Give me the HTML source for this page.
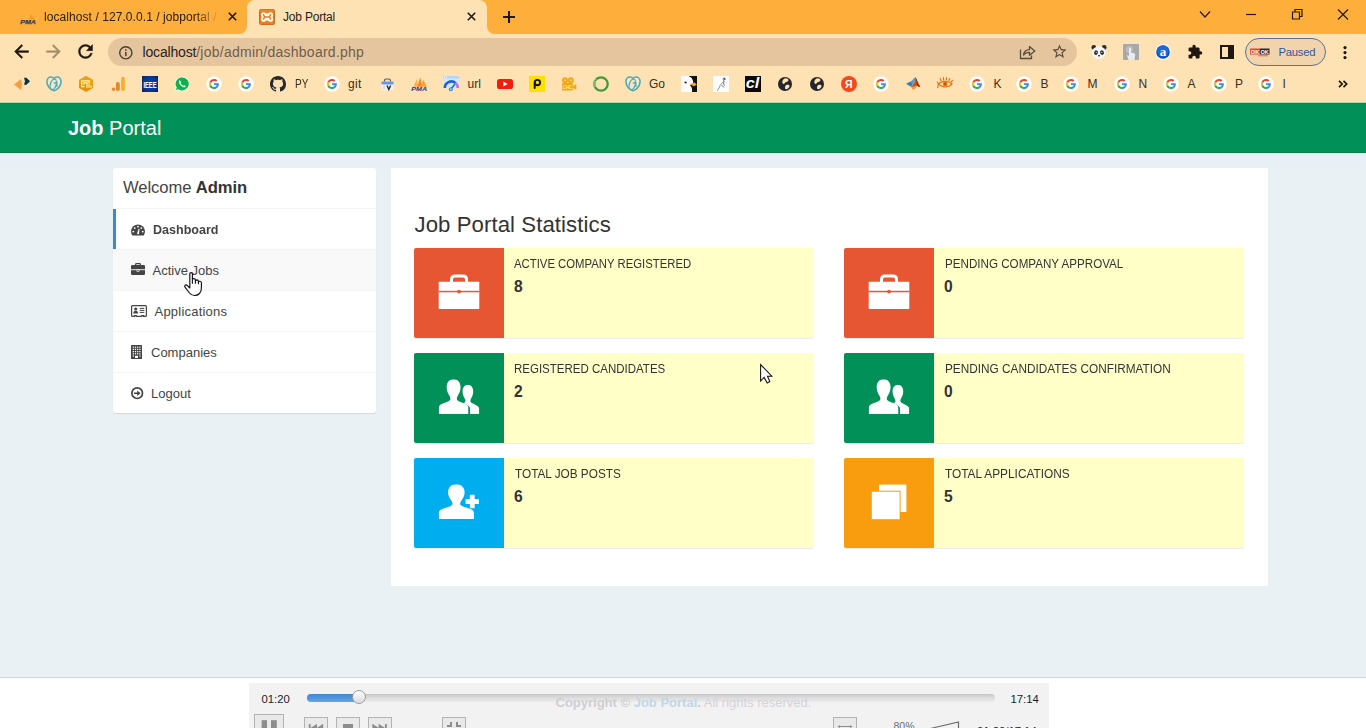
<!DOCTYPE html>
<html>
<head>
<meta charset="utf-8">
<title>Job Portal</title>
<style>
*{box-sizing:border-box;margin:0;padding:0}
html,body{width:1366px;height:728px;overflow:hidden;background:#eaf1f4;font-family:"Liberation Sans",sans-serif;}
.abs{position:absolute}
svg{position:absolute;overflow:visible}
.t{position:absolute;white-space:nowrap;line-height:1}
/* ---------- browser chrome ---------- */
#tabstrip{position:absolute;left:0;top:0;width:1366px;height:34px;background:#feae3b}
#toolbar{position:absolute;left:0;top:34px;width:1366px;height:69px;background:#fee2b3}
#omni{position:absolute;left:108px;top:38px;width:969px;height:28px;border-radius:14px;background:#e5c59d}
.bm{position:absolute;top:76px;width:16px;height:16px}
.bmt{position:absolute;top:77px;font-size:12px;color:#3a2e22;line-height:14px;white-space:nowrap}
/* ---------- page ---------- */
.sm{font-size:13px;line-height:14px;color:#444}
#nav{position:absolute;left:0;top:103px;width:1366px;height:50px;background:#009058}
#side{position:absolute;left:113px;top:168px;width:263px;height:245px;background:#fff;border-radius:3px;box-shadow:0 1px 1px rgba(0,0,0,.1)}
#content{position:absolute;left:391px;top:168px;width:877px;height:417.700px;background:#fff}
.ib{position:absolute;width:400px;height:90px;background:#ffffc8;border-radius:2px;box-shadow:0 1px 1px rgba(0,0,0,.08)}
.ib .ic{position:absolute;left:0;top:0;width:90px;height:90px;border-radius:2px 0 0 2px}
.ib .lb{position:absolute;left:100px;top:9px;font-size:12.500px;transform-origin:0 0;color:#333;white-space:nowrap;line-height:14px}
.ib .nm{position:absolute;left:100px;top:30px;font-size:15.600px;font-weight:bold;color:#333;line-height:18px}
#footer{position:absolute;left:0;top:677px;width:1366px;height:51px;background:#fff;border-top:1px solid #d2d6de}
#player{position:absolute;left:249px;top:683px;width:800px;height:45px;background:#f2f2f2}
.pb{border:1px solid #b2b2b2;background:#e9e9e9}
</style>
</head>
<body>
<!-- CHROME -->
<div id="tabstrip"></div>
<div id="toolbar"></div>
<div class="abs" style="left:0;top:102px;width:1366px;height:1px;background:#b9d6a2"></div>
<!-- active tab shape -->
<svg style="left:0;top:0" width="600" height="34" viewBox="0 0 600 34"><path d="M238.5 34 C243.5 34 247 30.5 247 26 V8 C247 3.5 250.5 0 255 0 H479 C483.500 0 487 3.5 487 8 V26 C487 30.5 490.500 34 495.500 34 Z" fill="#fee2b3"/></svg>
<!-- tab 1 -->
<svg id="pma1" style="left:20px;top:10px" width="17" height="15" viewBox="0 0 17 15"><path d="M3.500 9.300 L7.600 2.500 L8.600 9.300 Z" fill="#fdb64f" opacity=".55"/><path d="M8.800 9.300 L11 4 L14.800 9.300 Z" fill="#f8981f" opacity=".9"/><text x=".3" y="13.800" font-family="Liberation Sans" font-weight="bold" font-style="italic" font-size="5.400" fill="#3a3e5e" stroke="#3a3e5e" stroke-width=".25" textLength="15.600" lengthAdjust="spacingAndGlyphs">PMA</text></svg>
<div class="t" id="tab1t" style="letter-spacing:.07px;left:44px;top:10px;font-size:12px;color:#2b2016;width:175px;overflow:hidden;line-height:14px;-webkit-mask-image:linear-gradient(90deg,#000 152px,rgba(0,0,0,.18) 171px);mask-image:linear-gradient(90deg,#000 152px,rgba(0,0,0,.18) 171px)">localhost / 127.0.0.1 / jobportal /</div>
<svg style="left:227.600px;top:12.400px" width="9" height="9" viewBox="0 0 9 9"><path d="M0.800 0.800 L8.200 8.200 M8.200 0.800 L0.800 8.200" stroke="#1f1710" stroke-width="1.600" fill="none"/></svg>
<!-- tab 2 -->
<svg id="xampp" style="left:259px;top:9px" width="16" height="16" viewBox="0 0 16 16"><rect x="0" y="0" width="16" height="16" rx="2.200" fill="#c76a1c"/><rect x=".8" y=".8" width="14.400" height="14.400" rx="1.600" fill="#ec7c22"/><rect x=".8" y=".8" width="14.400" height="3" rx="1.600" fill="#e88a3a" opacity=".6"/><g fill="#fffbe8"><circle cx="4.600" cy="5.700" r="2.550"/><circle cx="11.500" cy="5.700" r="2.550"/><circle cx="4.600" cy="10.300" r="2.550"/><circle cx="11.500" cy="10.300" r="2.550"/><rect x="4.600" y="4.400" width="6.900" height="7.200"/><rect x="2.600" y="5.700" width="10.900" height="4.600"/></g><path d="M4.500 5.800 L5.600 8 L4.500 10.200 M11.600 5.800 L10.500 8 L11.600 10.200 M5.600 8 H10.500" fill="none" stroke="#e8792a" stroke-width="1.500" stroke-linecap="round" stroke-linejoin="round"/></svg>
<div class="t" id="tab2t" style="letter-spacing:-.2px;left:283px;top:10px;font-size:12px;color:#2b2016;line-height:14px">Job Portal</div>
<svg style="left:466.500px;top:12.400px" width="9" height="9" viewBox="0 0 9 9"><path d="M0.800 0.800 L8.200 8.200 M8.200 0.800 L0.800 8.200" stroke="#1f1710" stroke-width="1.600" fill="none"/></svg>
<svg style="left:503px;top:11px" width="12" height="12" viewBox="0 0 12 12"><path d="M6 0 V12 M0 6 H12" stroke="#1f1710" stroke-width="2" fill="none"/></svg>
<!-- window controls -->
<svg style="left:1196px;top:6px" width="160" height="18" viewBox="0 0 160 18"><g stroke="#2a1a0c" stroke-width="1.200" fill="none"><path d="M4 5.500 L9 11 L14 5.500"/><path d="M50 8.500 H60"/><path d="M96.500 6 H103.500 V13 H96.500 Z"/><path d="M99 6 V3.500 H106 V10.500 H103.500"/><path d="M142 3.500 L152 13.500 M152 3.500 L142 13.500"/></g></svg>
<!-- toolbar nav icons -->
<svg style="left:10.600px;top:41px" width="21" height="21" viewBox="0 0 24 24"><path d="M20 11H7.830l5.590-5.590L12 4l-8 8 8 8 1.410-1.410L7.830 13H20v-2z" fill="#1f1710" stroke="#1f1710" stroke-width=".5"/></svg>
<svg style="left:43.300px;top:41px" width="21" height="21" viewBox="0 0 24 24"><path d="M12 4l-1.410 1.410L16.170 11H4v2h12.170l-5.580 5.590L12 20l8-8z" fill="#a48c6b" stroke="#a48c6b" stroke-width=".4"/></svg>
<svg style="left:75.100px;top:41px" width="21" height="21" viewBox="0 0 24 24"><path d="M17.650 6.350C16.200 4.900 14.210 4 12 4c-4.420 0-7.990 3.580-7.990 8s3.570 8 7.990 8c3.730 0 6.840-2.550 7.730-6h-2.080c-.82 2.330-3.040 4-5.650 4-3.310 0-6-2.690-6-6s2.690-6 6-6c1.660 0 3.140.69 4.220 1.780L13 11h7V4l-2.350 2.350z" fill="#1f1710" stroke="#1f1710" stroke-width=".5"/></svg>
<div id="omni"></div>
<svg style="left:118px;top:44.500px" width="16" height="16" viewBox="0 0 16 16"><circle cx="7.800" cy="7.800" r="6.100" fill="none" stroke="#4a3f33" stroke-width="1.400"/><rect x="7.100" y="6.900" width="1.500" height="4.300" fill="#4a3f33"/><rect x="7.100" y="4.300" width="1.500" height="1.500" fill="#4a3f33"/></svg>
<div class="t" id="url" style="left:142.500px;top:44px;font-size:14px;line-height:17px;color:#6e5f4d"><span id="url1" style="letter-spacing:-.17px;color:#2b2218">localhost</span><span id="url2" style="letter-spacing:.25px">/job/admin/dashboard.php</span></div>
<!-- toolbar right -->
<svg id="share" style="left:1019px;top:45px" width="17" height="15" viewBox="0 0 17 15"><g fill="none" stroke="#5a4c3c" stroke-width="1.300" stroke-linejoin="round"><path d="M1.500 4.500 V13.500 H12.500 V10.500"/><path d="M4.500 10 C5 6.500 7.500 4.800 10.500 4.700 V1.500 L15.800 6 L10.500 10.300 V7.300 C8 7.200 6 8 4.500 10 Z"/></g></svg>
<svg id="star" style="left:1050.600px;top:43.300px" width="17" height="17" viewBox="0 0 24 24"><path d="M22 9.240l-7.190-.62L12 2 9.190 8.630 2 9.240l5.460 4.730L5.820 21 12 17.270 18.180 21l-1.630-7.030L22 9.240zM12 15.400l-3.760 2.270 1-4.280-3.320-2.880 4.380-.38L12 6.100l1.710 4.040 4.380.38-3.320 2.880 1 4.280L12 15.400z" fill="#5a4c3c"/></svg>
<svg id="panda" style="left:1091px;top:44px" width="16" height="16" viewBox="0 0 16 16"><circle cx="2.800" cy="3.400" r="2.400" fill="#2b2b2b"/><circle cx="13.200" cy="3.400" r="2.400" fill="#2b2b2b"/><ellipse cx="8" cy="8.600" rx="7" ry="6.300" fill="#f4f4f4"/><ellipse cx="5" cy="8.600" rx="1.900" ry="2.300" fill="#2b2b2b" transform="rotate(20 5 8.600)"/><ellipse cx="11" cy="8.600" rx="1.900" ry="2.300" fill="#2b2b2b" transform="rotate(-20 11 8.600)"/><circle cx="5.200" cy="8.300" r=".6" fill="#fff"/><circle cx="10.800" cy="8.300" r=".6" fill="#fff"/><ellipse cx="8" cy="11.700" rx="1.100" ry=".8" fill="#2b2b2b"/></svg>
<svg id="handext" style="left:1123px;top:44px" width="16" height="16" viewBox="0 0 16 16"><rect width="16" height="16" rx="1" fill="#a8a8a8"/><circle cx="6.500" cy="5.500" r="3.600" fill="#bdbdbd"/><path d="M5.600 16 L4 11.500 L5 11 L6 12.200 V4.600 Q6 3.600 7 3.600 Q8 3.600 8 4.600 V8.500 L11.500 9.500 Q12.300 9.800 12.200 10.800 L11.500 16 Z" fill="#e9ebf2"/></svg>
<svg id="aext" style="left:1155px;top:44px" width="16" height="16" viewBox="0 0 16 16"><circle cx="8" cy="8" r="8" fill="#f4f7ff"/><circle cx="8" cy="8" r="6.800" fill="#0f4fb8"/><circle cx="8" cy="7.200" r="5.600" fill="#1c68d6"/><text x="8" y="12.300" text-anchor="middle" font-family="Liberation Serif" font-weight="bold" font-size="13" fill="#fff">a</text></svg>
<svg id="puzzle" style="left:1185.700px;top:42px" width="20" height="20" viewBox="0 0 24 24"><path d="M20.500 11H19V7c0-1.100-.9-2-2-2h-4V3.500C13 2.120 11.880 1 10.500 1S8 2.120 8 3.500V5H4c-1.100 0-1.990.9-1.990 2v3.800H3.500c1.490 0 2.700 1.210 2.700 2.700s-1.210 2.700-2.700 2.700H2V20c0 1.100.9 2 2 2h3.800v-1.500c0-1.490 1.210-2.700 2.700-2.700 1.490 0 2.700 1.210 2.700 2.700V22H17c1.100 0 2-.9 2-2v-4h1.500c1.380 0 2.500-1.120 2.500-2.500S21.880 11 20.500 11z" fill="#1f1710" transform="translate(1.500,2.600) scale(.78)"/></svg>
<svg id="sidep" style="left:1220px;top:45px" width="14" height="14" viewBox="0 0 14 14"><rect x="1" y="1" width="12" height="12" fill="none" stroke="#1f1710" stroke-width="2"/><rect x="8" y="1" width="5" height="12" fill="#1f1710"/></svg>
<div class="abs" id="pill" style="left:1245px;top:38px;width:81px;height:28px;border-radius:14px;border:1px solid #5b7199;background:#f1d4ab"></div>
<svg id="okok" style="left:1250px;top:48px" width="20" height="9" viewBox="0 0 20 9"><rect x="0" y=".5" width="10" height="6" fill="#e8452c"/><rect x="10" y=".5" width="9.500" height="6" fill="#2e2a2a"/><text x="5" y="5.600" text-anchor="middle" font-family="Liberation Sans" font-weight="bold" font-size="5.600" fill="#fff">OK</text><text x="14.700" y="5.600" text-anchor="middle" font-family="Liberation Sans" font-weight="bold" font-size="5.600" fill="#fff">OK</text><rect x="8" y="7.300" width="10" height="1" fill="#e8654c"/></svg>
<div class="t" id="paused" style="left:1278.500px;top:45px;letter-spacing:-.25px;font-size:11.300px;line-height:14px;color:#36579a">Paused</div>
<svg style="left:1343px;top:45px" width="4" height="15" viewBox="0 0 4 15"><circle cx="2" cy="2.600" r="1.600" fill="#1f1710"/><circle cx="2" cy="7.600" r="1.600" fill="#1f1710"/><circle cx="2" cy="12.600" r="1.600" fill="#1f1710"/></svg>
<!-- BOOKMARKS -->
<svg width="0" height="0" style="left:0;top:0"><defs>
<symbol id="gsym" viewBox="0 0 16 16"><circle cx="8" cy="8" r="7.700" fill="#fff"/><g transform="translate(2.900,2.900) scale(.2125)"><path fill="#EA4335" d="M24 9.500c3.540 0 6.710 1.220 9.210 3.600l6.850-6.850C35.900 2.380 30.470 0 24 0 14.620 0 6.510 5.380 2.560 13.220l7.980 6.190C12.430 13.720 17.740 9.500 24 9.500z"/><path fill="#4285F4" d="M46.980 24.550c0-1.570-.15-3.090-.38-4.550H24v9.020h12.940c-.58 2.960-2.260 5.480-4.780 7.180l7.730 6c4.510-4.180 7.090-10.360 7.090-17.650z"/><path fill="#FBBC05" d="M10.530 28.590c-.48-1.450-.76-2.990-.76-4.590s.27-3.140.76-4.590l-7.980-6.190C.92 16.460 0 20.120 0 24c0 3.880.92 7.540 2.560 10.780l7.970-6.190z"/><path fill="#34A853" d="M24 48c6.480 0 11.930-2.130 15.890-5.810l-7.730-6c-2.150 1.450-4.920 2.300-8.160 2.300-6.260 0-11.570-4.220-13.470-9.910l-7.980 6.190C6.510 42.620 14.620 48 24 48z"/></g></symbol>
<symbol id="gdsym" viewBox="0 0 16 16"><g fill="none" stroke="#4fabb9" stroke-linejoin="round" stroke-linecap="round"><path d="M8 14.700 C4 13.600 .9 9.500 .9 5.600 C.9 2.800 2.900 1 5 1 C6.400 1 7.400 1.700 8 2.600 C8.600 1.700 9.600 1 11 1 C13.100 1 15.100 2.800 15.100 5.600 C15.100 9.500 12 13.600 8 14.700 Z" stroke-width="1.600" fill="#d9eee9" fill-opacity=".35"/><ellipse cx="7.300" cy="8.400" rx="2.900" ry="5.400" transform="rotate(17 7.300 8.400)" stroke-width="1.300"/><path d="M8.300 7.100 L10.700 6.300 L10.900 10.200" stroke-width="1.400"/></g></symbol>
<symbol id="globesym" viewBox="0 0 16 16"><circle cx="8" cy="8" r="7" fill="#23262b"/><path d="M8.500 2.300 C10.500 2.300 12 3.300 11.300 4.800 C10.600 6.200 8.300 5.700 7.700 7.200 C7.200 8.400 5.500 8 5.300 6.600 C5.100 4.600 6.500 2.300 8.500 2.300 Z M9.200 9 C10.600 8.300 12.900 8.600 12.600 10.300 C12.300 11.900 10.500 13.400 9 13.300 C7.600 13.200 7.800 9.700 9.200 9 Z" fill="#fee2b3"/></symbol>
</defs></svg>
<svg style="left:14px;top:77px" width="17" height="14" viewBox="0 0 17 14"><path d="M0 7.500 L7 2 L8 7.500 L7 13 Z" fill="#f99e3c"/><path d="M10 .7 H12.500 L16 4.200 L12.500 7.700 H10 L11 4.200 Z" fill="#0b3540"/></svg>
<svg style="left:46px;top:76px" width="16" height="16" viewBox="0 0 16 16"><use href="#gdsym"/></svg>
<svg style="left:78px;top:76px" width="16" height="16" viewBox="0 0 16 16"><path d="M8 -.1 L15 3.900 V12 L8 16 L1 12 V3.900 Z" fill="#e8910e"/><path d="M8 -.1 L15 3.900 V8 H1 V3.900 Z" fill="#efa01a"/><g fill="none" stroke="#fff7a0" stroke-width="1.250"><path d="M11.100 6.900 V4.800 H3.800 V10.500 H6.700"/><path d="M9.100 8 V6.900 H6 V8.800" stroke-width="1.100"/></g><g fill="#fff7a0"><rect x="8.400" y="7.900" width="1.150" height="3.900"/><rect x="10.450" y="7.300" width="1.150" height="4.500"/><rect x="12.500" y="9.100" width="1.150" height="2.700"/></g></svg>
<svg style="left:110px;top:76px" width="16" height="16" viewBox="0 0 16 16"><circle cx="3.500" cy="13.300" r="1.700" fill="#e8862c"/><rect x="5.900" y="6" width="3.900" height="9" rx="1.900" fill="#e8862c"/><rect x="11.200" y=".8" width="3.600" height="14.200" rx="1.800" fill="#f7ac2a"/></svg>
<svg style="left:142px;top:76px" width="16" height="16" viewBox="0 0 16 16"><defs><radialGradient id="ie" cx=".5" cy=".5" r=".75"><stop offset="0" stop-color="#0d45b5"/><stop offset=".6" stop-color="#0a3590"/><stop offset="1" stop-color="#061a48"/></radialGradient></defs><rect width="16" height="16" fill="url(#ie)"/><text x="8" y="11.700" text-anchor="middle" font-family="Liberation Sans" font-weight="bold" font-size="9.500" fill="#fff" textLength="13.200" lengthAdjust="spacingAndGlyphs">IEEE</text></svg>
<svg style="left:174px;top:76px" width="16" height="16" viewBox="0 0 16 16"><path d="M8.200 .6 A7.300 7.300 0 1 1 4.300 14.200 L.8 15.300 L1.900 11.900 A7.300 7.300 0 0 1 8.200 .6 Z" fill="#e6f7ea"/><path d="M8.200 1.400 A6.500 6.500 0 1 1 4.500 13.200 L2 14 L2.800 11.600 A6.500 6.500 0 0 1 8.200 1.400 Z" fill="#12b04b"/><path d="M5.800 4.300 C5.200 4.500 4.700 5.400 5 6.400 C5.600 8.500 7.500 10.600 9.800 11.200 C10.700 11.400 11.600 10.900 11.800 10.200 L10.100 9.200 L9.300 9.900 C8.300 9.500 7 8.200 6.500 7.100 L7.200 6.300 Z" fill="#fff"/></svg>
<svg style="left:206px;top:76px" width="16" height="16" viewBox="0 0 16 16"><use href="#gsym"/></svg>
<svg style="left:238px;top:76px" width="16" height="16" viewBox="0 0 16 16"><use href="#gsym"/></svg>
<svg style="left:270px;top:76px" width="16" height="16" viewBox="0 0 16 16"><path fill="#24292e" d="M8 0C3.580 0 0 3.580 0 8c0 3.540 2.290 6.530 5.470 7.590.4.070.55-.17.550-.38 0-.19-.01-.82-.01-1.490-2.010.37-2.530-.49-2.690-.94-.09-.23-.48-.94-.82-1.130-.28-.15-.68-.52-.01-.53.630-.01 1.080.58 1.230.82.720 1.210 1.870.87 2.330.66.070-.52.280-.87.510-1.070-1.780-.2-3.640-.89-3.640-3.950 0-.87.310-1.590.82-2.150-.08-.2-.36-1.020.08-2.120 0 0 .67-.21 2.200.82.640-.18 1.320-.27 2-.27.680 0 1.360.09 2 .27 1.530-1.040 2.200-.82 2.200-.82.440 1.100.16 1.920.08 2.120.51.560.82 1.270.82 2.150 0 3.070-1.870 3.750-3.650 3.950.29.250.54.730.54 1.480 0 1.070-.01 1.930-.01 2.200 0 .21.150.46.550.38A8.013 8.013 0 0016 8c0-4.420-3.580-8-8-8z"/></svg>
<div class="bmt" id="bPY" style="left:294.500px;transform:scaleX(.84);transform-origin:0 0">PY</div>
<svg style="left:324px;top:76px" width="16" height="16" viewBox="0 0 16 16"><use href="#gsym"/></svg>
<div class="bmt" id="bgit" style="left:348px;letter-spacing:.35px">git</div>
<svg style="left:381px;top:78px" width="13" height="13" viewBox="0 0 13 13"><path d="M3.500 4 V2.800 Q3.500 1 5.300 1 H7.700 Q9.500 1 9.500 2.800 V4" fill="none" stroke="#565b68" stroke-width="1.200"/><rect x=".5" y="3.500" width="12" height="9" rx="1" fill="#f6f1e6"/><rect x=".5" y="3.500" width="12" height="3" rx=".8" fill="#6896e6"/><path d="M6 7.500 L7.800 11.500 L9.600 7.500" fill="none" stroke="#2a2e38" stroke-width="1.500"/><rect x="2.300" y="7.800" width="1.500" height="3.400" fill="#c9d3e6"/></svg>
<svg style="left:411px;top:77px" width="17" height="15" viewBox="0 0 17 15"><path d="M2.500 9.800 L6 1.800 L7.200 9.800 Z" fill="#f9b04e"/><path d="M6.200 9.800 L9.300 .3 L11.300 9.800 Z" fill="#f58a1f"/><path d="M10.200 9.800 L12 2.500 L16 9.800 Z" fill="#f9a03a"/><text x=".3" y="14.300" font-family="Liberation Sans" font-weight="bold" font-style="italic" font-size="5.600" fill="#2f347c" textLength="15.800" lengthAdjust="spacingAndGlyphs">PMA</text></svg>
<svg style="left:443px;top:76px" width="17" height="16" viewBox="0 0 17 16"><rect x="0" y="0" width="16.500" height="12" rx="1" fill="#d6e8fc"/><rect x="0" y="0" width="16.500" height="2.400" rx="1" fill="#b6d4fa"/><circle cx="1.600" cy="1.200" r=".6" fill="#fff"/><circle cx="3.400" cy="1.200" r=".6" fill="#fff"/><path d="M1.800 12 A6.500 6.500 0 0 1 12.500 7" fill="none" stroke="#1a5fe0" stroke-width="2.600"/><path d="M12.500 7 A6.500 6.500 0 0 1 14.800 12" fill="none" stroke="#c070e0" stroke-width="2.600"/><path d="M8 13 L11.800 8.300" stroke="#1a5fe0" stroke-width="1.400"/><circle cx="7.800" cy="13.200" r="2" fill="#2f8bf5"/><circle cx="7.800" cy="13.200" r=".9" fill="#9fd0ff"/></svg>
<div class="bmt" id="burl" style="left:467.5px">url</div>
<svg style="left:497px;top:79px" width="16" height="10" viewBox="0 0 16 10"><rect width="16" height="10" rx="2.600" fill="#f61c0d"/><path d="M6.300 2.600 L10.600 5 L6.300 7.400 Z" fill="#fff"/></svg>
<svg style="left:529px;top:76px" width="16" height="16" viewBox="0 0 16 16"><rect width="16" height="16" fill="#ffdf00"/><circle cx="8.400" cy="6.600" r="2.700" fill="none" stroke="#111" stroke-width="1.900"/><path d="M5.700 7 V12" stroke="#111" stroke-width="1.900" stroke-linecap="round"/></svg>
<svg style="left:561px;top:77px" width="16" height="14" viewBox="0 0 16 14"><g fill="#f9a50e"><circle cx="4" cy="3.200" r="2.900"/><circle cx="9.800" cy="3.200" r="2.900"/><rect x="1" y="6" width="10.800" height="7.600" rx="1.200"/><path d="M11.500 9.500 L15.300 7 V12.800 L11.500 10.500 Z"/></g><circle cx="4" cy="3.200" r="1" fill="#ffd98a"/><circle cx="9.800" cy="3.200" r="1" fill="#ffd98a"/><text x="6.400" y="12" text-anchor="middle" font-family="Liberation Sans" font-weight="bold" font-size="4.500" fill="#ffe9b8">CHC</text></svg>
<svg style="left:593px;top:76px" width="16" height="16" viewBox="0 0 16 16"><circle cx="8" cy="8" r="6.700" fill="none" stroke="#3f9a38" stroke-width="2.300"/><path d="M3.200 3.400 A6.700 6.700 0 0 0 2 11" fill="none" stroke="#9fc98a" stroke-width="2.400" stroke-dasharray="1 .8"/></svg>
<svg style="left:625px;top:76px" width="16" height="16" viewBox="0 0 16 16"><use href="#gdsym"/></svg>
<div class="bmt" id="bGo" style="left:649px">Go</div>
<svg style="left:681px;top:76px" width="16" height="16" viewBox="0 0 16 16"><rect width="16" height="16" fill="#111"/><path d="M0 0 H7.500 C11.500 1.500 12.500 5 12.200 7.500 L9 9.500 C11 11 11.500 14 11 16 H0 Z" fill="#fbfbfb"/><path d="M8.500 8.300 L13.500 6.500 L16 8.800 L12.800 10.300 Z" fill="#f5a030"/><ellipse cx="4.600" cy="6.500" rx="1.300" ry=".9" fill="#222" transform="rotate(25 4.600 6.500)"/></svg>
<svg style="left:713px;top:76px" width="16" height="16" viewBox="0 0 16 16"><rect width="16" height="16" fill="#fdfdfd"/><g fill="none" stroke="#555" stroke-width=".9"><path d="M10.800 1.500 C9.800 2.500 10.200 4.500 11.200 5 C10.200 6.500 10.500 8 11.500 9.500"/><path d="M10.500 5.500 C8.500 7.500 7 9 6.500 11 C6 12.500 5 13.500 4.200 14.800" stroke="#888"/><path d="M8.500 9.500 C9.500 10 10.800 10.500 11.300 11.500" stroke="#666"/><path d="M11.500 2 L12 4" stroke="#333" stroke-width="1.200"/></g></svg>
<svg style="left:745px;top:76px" width="16" height="16" viewBox="0 0 16 16"><rect width="16" height="16" fill="#0a0a0a"/><text x="7.600" y="12.300" text-anchor="middle" font-family="Liberation Sans" font-weight="bold" font-style="italic" font-size="14.500" fill="#fff" textLength="13.600" lengthAdjust="spacingAndGlyphs">cl</text></svg>
<svg style="left:777px;top:76px" width="16" height="16" viewBox="0 0 16 16"><use href="#globesym"/></svg>
<svg style="left:809px;top:76px" width="16" height="16" viewBox="0 0 16 16"><use href="#globesym"/></svg>
<svg style="left:841px;top:76px" width="16" height="16" viewBox="0 0 16 16"><circle cx="8" cy="8" r="8" fill="#f4491a"/><text x="7.800" y="12" text-anchor="middle" font-family="Liberation Sans" font-weight="bold" font-size="10.500" fill="#fff">&#1071;</text></svg>
<svg style="left:873px;top:76px" width="16" height="16" viewBox="0 0 16 16"><use href="#gsym"/></svg>
<svg style="left:906px;top:77px" width="15" height="13" viewBox="0 0 15 13"><path d="M0 6.800 L4.500 4.600 L7 6.500 L5 9.800 Z" fill="#3a7bbf"/><path d="M4.500 4.600 C6.500 3.500 8 1 9.300 0 C9.500 3 8 7.500 5 9.800 L7 6.500 Z" fill="#5a9ad6"/><path d="M9.300 0 C10.800 2 12.500 8 14.500 9.800 C13 10 12 9.500 11 8.500 C10 10 8.500 12 7.300 12.500 L5 9.800 C8 7.500 9.500 3 9.300 0 Z" fill="#d0551a"/><path d="M9.300 0 C10.800 2 12.500 8 14.500 9.800 C13 10 12 9.500 11 8.500 C10.800 5.500 10 2 9.300 0 Z" fill="#8a2a10"/><path d="M5 9.800 L7.300 12.500 C8.500 12 10 10 11 8.500 C9 9.500 7 10 5 9.800 Z" fill="#f0a030"/></svg>
<svg style="left:937px;top:77px" width="17" height="12" viewBox="0 0 17 12"><g fill="none" stroke="#e8720c" stroke-width="1.200" stroke-linecap="round"><path d="M1.500 7.200 C4 3.600 11 3.200 15 6.800 C11.500 10.800 5 10.800 1.500 7.200 Z"/><path d="M1.500 7.200 L.6 10.600 M1.500 7.200 L.4 5"/><path d="M4.200 3.700 L3.200 1.600 M6.700 2.900 L6.300 .7 M9.300 2.900 L9.600 .6 M11.800 3.600 L12.800 1.500 M14 5 L15.600 3.400"/></g><circle cx="8.200" cy="7" r="2.300" fill="#e8720c"/><circle cx="8.200" cy="7" r=".9" fill="#c23c08"/></svg>
<svg style="left:969px;top:76px" width="16" height="16" viewBox="0 0 16 16"><use href="#gsym"/></svg>
<div class="bmt" style="left:993.5px">K</div>
<svg style="left:1016px;top:76px" width="16" height="16" viewBox="0 0 16 16"><use href="#gsym"/></svg>
<div class="bmt" style="left:1040.5px">B</div>
<svg style="left:1063px;top:76px" width="16" height="16" viewBox="0 0 16 16"><use href="#gsym"/></svg>
<div class="bmt" style="left:1087.5px">M</div>
<svg style="left:1114px;top:76px" width="16" height="16" viewBox="0 0 16 16"><use href="#gsym"/></svg>
<div class="bmt" style="left:1138.5px">N</div>
<svg style="left:1163px;top:76px" width="16" height="16" viewBox="0 0 16 16"><use href="#gsym"/></svg>
<div class="bmt" style="left:1187.5px">A</div>
<svg style="left:1211px;top:76px" width="16" height="16" viewBox="0 0 16 16"><use href="#gsym"/></svg>
<div class="bmt" style="left:1235px">P</div>
<svg style="left:1258px;top:76px" width="16" height="16" viewBox="0 0 16 16"><use href="#gsym"/></svg>
<div class="bmt" style="left:1282.5px">I</div>
<svg style="left:1338px;top:80px" width="10" height="8" viewBox="0 0 10 8"><path d="M1 .8 L4.200 4 L1 7.200 M5.500 .8 L8.700 4 L5.500 7.200" fill="none" stroke="#1f1710" stroke-width="1.700"/></svg>
<!-- PAGE -->
<div id="nav"></div>
<div class="abs" style="left:0;top:103px;width:1366px;height:1px;background:#17804f"></div>
<div class="abs" style="left:0;top:152px;width:1366px;height:1px;background:#0e7d4d"></div>
<div class="abs" style="left:0;top:153px;width:1366px;height:1px;background:#c9f9e8"></div>
<div class="abs" style="left:0;top:154px;width:1366px;height:14px;background:linear-gradient(#e8eff8,#eaf1f4)"></div>
<div class="t" id="brand" style="left:68px;top:117px;font-size:20px;line-height:22px;color:#fff"><b>Job</b> Portal</div>
<div id="side">
  <div class="abs" style="left:0;top:40px;width:263px;height:1px;background:#f4f4f4"></div>
  <div class="abs" style="left:0;top:82px;width:263px;height:40px;background:#f9f9f9"></div>
  <div class="abs" style="left:0;top:81px;width:263px;height:1px;background:#f4f4f4"></div>
  <div class="abs" style="left:0;top:122px;width:263px;height:1px;background:#f4f4f4"></div>
  <div class="abs" style="left:0;top:163px;width:263px;height:1px;background:#f4f4f4"></div>
  <div class="abs" style="left:0;top:204px;width:263px;height:1px;background:#f4f4f4"></div>
  <div class="abs" style="left:0;top:41px;width:3px;height:40px;background:#3c8dbc"></div>
</div>
<div class="t" id="welcome" style="left:123px;top:179px;letter-spacing:-.08px;font-size:16.600px;line-height:18px;color:#444">Welcome <b style="color:#333">Admin</b></div>
<div class="t sm" id="m1" style="left:153px;top:223px;font-weight:bold;transform:scaleX(.965);transform-origin:0 0">Dashboard</div>
<div class="t sm" id="m2" style="left:152.500px;top:264px">Active Jobs</div>
<div class="t sm" id="m3" style="left:154.500px;top:305px;letter-spacing:.22px">Applications</div>
<div class="t sm" id="m4" style="left:151px;top:346px">Companies</div>
<div class="t sm" id="m5" style="left:151px;top:387px">Logout</div>
<div id="content"></div>
<div class="t" id="h3" style="left:414.500px;top:213px;letter-spacing:.07px;font-size:22.200px;line-height:24px;color:#333">Job Portal Statistics</div>
<div class="ib" style="left:414px;top:248px"><div class="ic" style="background:#e65633"></div><div class="lb" id="l1" style="left:100px;transform:scaleX(0.907)">ACTIVE COMPANY REGISTERED</div><div class="nm" id="n1">8</div></div>
<div class="ib" style="left:844px;top:248px"><div class="ic" style="background:#e65633"></div><div class="lb" id="l2" style="left:100.5px;transform:scaleX(0.93)">PENDING COMPANY APPROVAL</div><div class="nm" id="n2">0</div></div>
<div class="ib" style="left:414px;top:353px"><div class="ic" style="background:#009058"></div><div class="lb" id="l3" style="left:100px;transform:scaleX(0.92)">REGISTERED CANDIDATES</div><div class="nm" id="n3">2</div></div>
<div class="ib" style="left:844px;top:353px"><div class="ic" style="background:#009058"></div><div class="lb" id="l4" style="left:100.5px;transform:scaleX(0.944)">PENDING CANDIDATES CONFIRMATION</div><div class="nm" id="n4">0</div></div>
<div class="ib" style="left:414px;top:458px"><div class="ic" style="background:#00aeef"></div><div class="lb" id="l5" style="left:100.5px;transform:scaleX(0.942)">TOTAL JOB POSTS</div><div class="nm" id="n5">6</div></div>
<div class="ib" style="left:844px;top:458px"><div class="ic" style="background:#f99d0e"></div><div class="lb" id="l6" style="left:101px;transform:scaleX(0.948)">TOTAL APPLICATIONS</div><div class="nm" id="n6">5</div></div>
<!-- sidebar icons -->
<svg id="i1" style="left:131px;top:223.500px" width="14" height="12" viewBox="0 0 14 12"><path d="M1.300 11.600 A7 7 0 1 1 12.700 11.600 Z" fill="#444"/><g fill="#fff"><circle cx="2.300" cy="7.600" r=".95"/><circle cx="3.700" cy="4.100" r=".95"/><circle cx="7" cy="2.600" r=".95"/><circle cx="10.300" cy="4.100" r=".95"/><circle cx="11.700" cy="7.600" r=".95"/><path d="M6 9.800 L7.700 4.600 L8.500 4.900 L7.900 10.200 Z"/></g></svg>
<svg id="i2" style="left:131px;top:263px" width="14" height="12" viewBox="0 0 14 12"><path d="M4.600 2.200 V1.400 Q4.600 .6 5.400 .6 H8.600 Q9.400 .6 9.400 1.400 V2.200" fill="none" stroke="#444" stroke-width="1.200"/><rect x="0" y="2" width="14" height="10" rx="1.200" fill="#444"/><rect x="0" y="6.300" width="14" height=".9" fill="#f9f9f9"/><rect x="5.600" y="6.300" width="2.800" height="2.300" fill="#f9f9f9"/><rect x="6.300" y="7" width="1.400" height=".9" fill="#444"/></svg>
<svg id="i3" style="left:131px;top:305px" width="16" height="12" viewBox="0 0 16 12"><path d="M1.600 .6 H14.400 Q15.400 .6 15.400 1.600 V10.400 Q15.400 11.400 14.400 11.400 H12.600 V10.500 H10.800 V11.400 H5.200 V10.500 H3.400 V11.400 H1.600 Q.6 11.400 .6 10.400 V1.600 Q.6 .6 1.600 .6 Z" fill="none" stroke="#444" stroke-width="1.200"/><circle cx="4.700" cy="4" r="1.600" fill="#444"/><path d="M2.300 8.600 Q2.300 5.800 4.700 5.800 Q7.100 5.800 7.100 8.600 Z" fill="#444"/><path d="M8.700 3.400 H13.300 M8.700 5.400 H13.300 M8.700 7.400 H13.300" stroke="#444" stroke-width="1"/></svg>
<svg id="i4" style="left:131px;top:345px" width="11" height="14" viewBox="0 0 11 14"><rect width="11" height="14" rx=".5" fill="#444"/><g fill="#fff"><rect x="1.700" y="1.600" width="1.250" height="1.250"/><rect x="3.900" y="1.600" width="1.250" height="1.250"/><rect x="6.100" y="1.600" width="1.250" height="1.250"/><rect x="8.300" y="1.600" width="1.250" height="1.250"/><rect x="1.700" y="3.800" width="1.250" height="1.250"/><rect x="3.900" y="3.800" width="1.250" height="1.250"/><rect x="6.100" y="3.800" width="1.250" height="1.250"/><rect x="8.300" y="3.800" width="1.250" height="1.250"/><rect x="1.700" y="6" width="1.250" height="1.250"/><rect x="3.900" y="6" width="1.250" height="1.250"/><rect x="6.100" y="6" width="1.250" height="1.250"/><rect x="8.300" y="6" width="1.250" height="1.250"/><rect x="1.700" y="8.200" width="1.250" height="1.250"/><rect x="3.900" y="8.200" width="1.250" height="1.250"/><rect x="6.100" y="8.200" width="1.250" height="1.250"/><rect x="8.300" y="8.200" width="1.250" height="1.250"/><rect x="1.700" y="10.400" width="1.250" height="1.250"/><rect x="8.300" y="10.400" width="1.250" height="1.250"/><rect x="4" y="10.800" width="3" height="2.200"/></g></svg>
<svg id="i5" style="left:131px;top:386.800px" width="13" height="13" viewBox="0 0 13 13"><circle cx="6.200" cy="6.200" r="5.300" fill="none" stroke="#444" stroke-width="1.700"/><path d="M3 5.400 H6.200 V3.400 L9.600 6.200 L6.200 9 V7 H3 Z" fill="#444"/></svg>
<!-- info icons -->
<svg id="bc1" style="left:438px;top:274px" width="42" height="36" viewBox="0 0 42 36"><path d="M13.500 9 V5.500 Q13.500 2 17 2 H25 Q28.500 2 28.500 5.500 V9" fill="none" stroke="#fff" stroke-width="3"/><rect x=".7" y="7.700" width="40.600" height="27.300" rx=".8" fill="#fff"/><rect x=".7" y="16.800" width="40.600" height="1.500" fill="#e65633"/><circle cx="21" cy="17.600" r="1.900" fill="#e65633"/></svg>
<svg id="bc2" style="left:868px;top:274px" width="42" height="36" viewBox="0 0 42 36"><path d="M13.500 9 V5.500 Q13.500 2 17 2 H25 Q28.500 2 28.500 5.500 V9" fill="none" stroke="#fff" stroke-width="3"/><rect x=".7" y="7.700" width="40.600" height="27.300" rx=".8" fill="#fff"/><rect x=".7" y="16.800" width="40.600" height="1.500" fill="#e65633"/><circle cx="21" cy="17.600" r="1.900" fill="#e65633"/></svg>
<svg width="0" height="0" style="left:0;top:0"><defs>
<symbol id="person" viewBox="0 0 30 35" preserveAspectRatio="none"><path d="M15 0 C19.500 0 22 3.500 22 8 C22 12.500 20 15 18.700 17.500 C18.200 18.500 18.200 20 18.500 20.800 C20.500 22.500 24 23.500 27 25 C29 26 30 27.500 30 29.500 V35 H0 V29.500 C0 27.500 1 26 3 25 C6 23.500 9.500 22.500 11.500 20.800 C11.800 20 11.800 18.500 11.300 17.500 C10 15 8 12.500 8 8 C8 3.500 10.500 0 15 0 Z"/></symbol>
</defs></svg>
<svg id="pp1" style="left:438px;top:379px" width="42" height="36" viewBox="0 0 42 36"><use href="#person" x="18.500" y="5.700" width="22.800" height="29.300" fill="#fff"/><use href="#person" x="-.8" y="-.8" width="33" height="37" fill="#009058"/><use href="#person" x=".7" y=".3" width="29.800" height="34.700" fill="#fff"/></svg>
<svg id="pp2" style="left:868px;top:379px" width="42" height="36" viewBox="0 0 42 36"><use href="#person" x="18.500" y="5.700" width="22.800" height="29.300" fill="#fff"/><use href="#person" x="-.8" y="-.8" width="33" height="37" fill="#009058"/><use href="#person" x=".7" y=".3" width="29.800" height="34.700" fill="#fff"/></svg>
<svg id="pa" style="left:438px;top:484px" width="42" height="36" viewBox="0 0 42 36"><use href="#person" x=".7" y=".3" width="35.300" height="34.700" fill="#fff"/><path d="M27.600 17.500 H40.900 M34.250 10.850 V24.150" stroke="#00aeef" stroke-width="6.800"/><path d="M27.600 17.500 H40.900 M34.250 10.850 V24.150" stroke="#fff" stroke-width="4.800"/></svg>
<svg id="br" style="left:871px;top:484px" width="36" height="36" viewBox="0 0 36 36"><rect x="8" y=".6" width="27.400" height="27.400" fill="#fff"/><rect x="-.2" y="6.700" width="29.800" height="29" fill="#f99d0e"/><rect x=".8" y="7.700" width="27.800" height="27.500" fill="#fff"/></svg>
<div id="footer"></div>
<div id="player"></div>
<div class="abs" style="left:306.500px;top:693.500px;width:688px;height:8.500px;border-radius:4.250px;background:linear-gradient(#c6c6c6,#dcdcdc 45%,#ebebeb)"></div>
<div class="abs" style="left:306.500px;top:693.500px;width:56px;height:8.500px;border-radius:4.250px;background:linear-gradient(#4686d2,#4f95dd 50%,#66a6e6)"></div>
<div class="abs" style="left:351.800px;top:689.800px;width:14px;height:14px;border-radius:7px;border:1px solid #9c9c9c;background:linear-gradient(#fdfdfd,#dcdcdc)"></div>
<div class="t" id="copy" style="left:555.500px;top:696px;font-size:13px;line-height:14px;color:#d4d4d4;transform-origin:0 0"><b style="color:#cfcfcf">Copyright &copy; <span style="color:#c2d6e5">Job Portal</span><span style="color:#c9c9c9">.</span></b> All rights reserved.</div>
<div class="t" id="pt1" style="left:261.500px;top:693px;font-size:11.300px;line-height:12px;color:#1b1b2b">01:20</div>
<div class="t" id="pt2" style="left:1010.500px;top:693px;font-size:11.300px;line-height:12px;color:#1b1b2b">17:14</div>
<div class="abs pb" style="left:254px;top:714px;width:30px;height:20px"></div>
<div class="abs pb" style="left:304px;top:717px;width:24px;height:20px"></div>
<div class="abs pb" style="left:336px;top:717px;width:24px;height:20px"></div>
<div class="abs pb" style="left:368px;top:717px;width:24px;height:20px"></div>
<div class="abs pb" style="left:442px;top:717px;width:24px;height:20px"></div>
<div class="abs pb" style="left:833px;top:717px;width:24px;height:20px"></div>
<svg style="left:249px;top:708px" width="800" height="20" viewBox="0 0 800 20"><g fill="#8c8c8c"><rect x="12.600" y="12.200" width="5.400" height="8"/><rect x="22" y="12.200" width="5.800" height="8"/><rect x="59.800" y="16" width="1.800" height="4"/><path d="M68 15.800 L61.600 20 H68 Z M74.200 15.800 L67.800 20 H74.200 Z"/><rect x="94" y="16" width="10" height="4"/><path d="M123.400 15.800 L129.800 20 H123.400 Z M129.600 15.800 L136 20 H129.600 Z"/><rect x="136" y="16" width="1.800" height="4"/><path d="M201 14 H203 V19 H198 V17 H201 Z M207 14 H209 V17 H212 V19 H207 Z"/><path d="M588.500 18.500 L591 17 V20 Z M603.500 18.500 L601 17 V20 Z"/><rect x="590.500" y="18" width="11" height="1"/></g><path d="M681.500 20.500 L709.500 14 V20.500" fill="none" stroke="#6a6a6a" stroke-width="1.200"/></svg>
<div class="t" id="vol" style="left:893.500px;top:721px;font-size:10.500px;line-height:10px;color:#6e6e6e">80%</div>
<div class="t" id="pt3" style="left:977px;top:725.300px;font-size:11.300px;line-height:12px;color:#1b1b2b">01:20/17:14</div>
<!-- cursors -->
<svg id="hand" style="left:184px;top:272px" width="19" height="25" viewBox="0 0 19 25"><path d="M5.800 1.800 Q5.800 .6 7.100 .6 Q8.400 .6 8.400 1.800 V7.400 Q8.600 6.600 9.900 6.600 Q11.300 6.600 11.400 8 V8.600 Q11.800 7.900 13 7.900 Q14.300 8 14.400 9.300 V9.800 Q14.900 9.200 15.900 9.300 Q17.400 9.500 17.400 11 V16 Q17.400 19.500 15.500 21.500 Q13.500 23.500 10.500 23.500 Q7.500 23.500 5.500 21 L1 15.200 Q.2 14 1.200 13.200 Q2.300 12.500 3.400 13.600 L5.800 16 Z" fill="#fff" stroke="#111" stroke-width="1.150" stroke-linejoin="round"/><path d="M8.400 7.400 V11.800 M11.400 8.600 V11.800 M14.400 9.800 V12.200" stroke="#111" stroke-width="1.100" fill="none"/></svg>
<svg id="arrow" style="left:759.500px;top:364.300px" width="13" height="20" viewBox="0 0 13 20"><path d="M.6 .6 V17 L4.200 13.400 L7.200 19 L9.800 17.500 L7.500 12.200 H11.800 Z" fill="#fff" stroke="#111" stroke-width="1.050" stroke-linejoin="miter"/></svg>
</body>
</html>
